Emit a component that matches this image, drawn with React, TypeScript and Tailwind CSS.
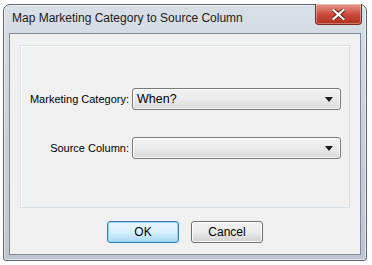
import React from "react";

const uiFont = { fontFamily: '"Liberation Sans", Arial, sans-serif' };

const Dropdown = ({ value }: { value?: string }) => (
  <div className="flex h-[22px] w-[209px] items-center justify-between rounded-[3px] border border-[#7a7a7a] bg-gradient-to-b from-[#f3f3f3] via-[#ebebeb] to-[#d9d9d9] pl-[4px] pr-[5px] shadow-[inset_0_0_0_1px_rgba(255,255,255,0.7)]">
    <span className="text-[12.5px] leading-none text-black">{value ?? ""}</span>
    <svg width="8" height="5" viewBox="0 0 8 5" className="mr-[2px]">
      <path d="M0 0h8L4 5z" fill="#1a1a1a" />
    </svg>
  </div>
);

export default function App() {
  return (
    <div className="h-[265px] w-[372px] bg-white pl-[3px] pt-[4px]" style={uiFont}>
      <div className="flex h-[257px] w-[364px] flex-col rounded-t-[7px] rounded-b-[3px] border border-[#5b6673] bg-gradient-to-b from-[#d9dfe6] via-[#c9d0d8] to-[#bcc5cf] px-[5px] pb-[5px] shadow-[inset_0_0_0_1px_rgba(255,255,255,0.55)]">
        {/* title bar */}
        <div className="flex h-[28px] items-start">
          <span className="pl-[3px] pt-[7px] text-[12px] leading-none text-[#1b1b1b]">
            Map Marketing Category to Source Column
          </span>
          <div className="ml-auto mr-[-1px] mt-[-1px] flex h-[21px] w-[47px] items-center justify-center rounded-b-[4px] border border-t-0 border-[#7d2a20] bg-gradient-to-b from-[#e59a8a] via-[#cc4b3d] to-[#b2301f] shadow-[inset_0_0_0_1px_rgba(255,255,255,0.35)]">
            <svg width="13" height="11" viewBox="0 0 13 11">
              <path
                d="M1.5 1 L11.5 10 M11.5 1 L1.5 10"
                stroke="#5a1a12"
                strokeWidth="4"
                strokeLinecap="square"
              />
              <path
                d="M1.5 1 L11.5 10 M11.5 1 L1.5 10"
                stroke="#ffffff"
                strokeWidth="2.2"
                strokeLinecap="square"
              />
            </svg>
          </div>
        </div>

        {/* client area */}
        <div className="flex flex-1 flex-col border border-[#7f8a96] bg-[#f0f0f0] px-[10px] pt-[11px]">
          <div className="h-[163px] border border-[#d5dfe5] shadow-[inset_1px_1px_0_0_#ffffff]">
            <div className="flex flex-col gap-[27px] pt-[42px]">
              <div className="flex items-center gap-[3px]">
                <span className="w-[108px] whitespace-nowrap text-right text-[11px] text-black">
                  Marketing Category:
                </span>
                <Dropdown value="When?" />
              </div>
              <div className="flex items-center gap-[3px]">
                <span className="w-[108px] whitespace-nowrap text-right text-[11px] text-black">
                  Source Column:
                </span>
                <Dropdown />
              </div>
            </div>
          </div>

          <div className="flex justify-center gap-[12px] pt-[13px]">
            <button className="flex h-[22px] w-[72px] items-center justify-center rounded-[3px] border border-[#3c7fb1] bg-gradient-to-b from-[#eaf6fd] via-[#d9f0fc] to-[#a7d9f5] text-[12px] text-black shadow-[inset_0_0_0_1px_#8fd2f3]">
              OK
            </button>
            <button className="flex h-[22px] w-[72px] items-center justify-center rounded-[3px] border border-[#707070] bg-gradient-to-b from-[#f2f2f2] via-[#ebebeb] to-[#cfcfcf] text-[12px] text-black shadow-[inset_0_0_0_1px_rgba(255,255,255,0.8)]">
              Cancel
            </button>
          </div>
        </div>
      </div>
    </div>
  );
}
